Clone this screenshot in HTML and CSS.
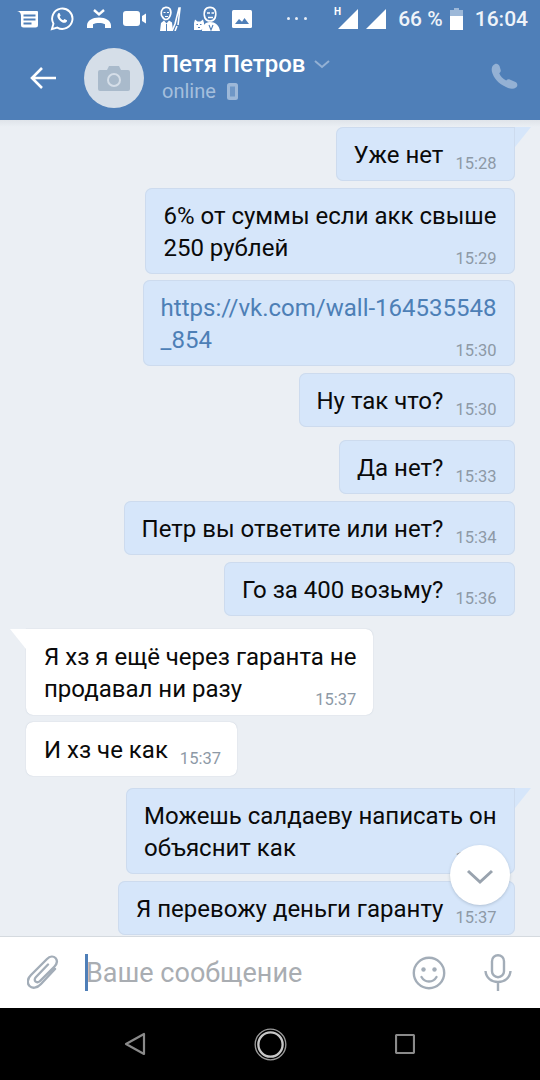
FILE: index.html
```html
<!DOCTYPE html>
<html lang="ru">
<head>
<meta charset="utf-8">
<title>Петя Петров</title>
<link rel="stylesheet" href="styles.css">
</head>
<body>
<div class="screen">
  <header class="top">
    <div class="status">
      <div class="status-icons">
        <svg class="si" width="21" height="18" viewBox="0 0 21 18"><path d="M0 1h20a1 1 0 0 1 1 1v13a2.500 2.500 0 0 1-2.500 2.500H6.500A2.500 2.500 0 0 1 4 15V5.500A5 5 0 0 0 0 1z" fill="#fff"/><path d="M6.500 5.500h12M6.500 9.500h12M6.500 13.500h8" stroke="#4f7fb8" stroke-width="1.800"/></svg>
        <svg class="si" width="24" height="24" viewBox="0 0 25 25"><path d="M2 23l1.600-5.600A10.600 10.600 0 1 1 7.600 21.400z" fill="none" stroke="#fff" stroke-width="2"/><path d="M8.600 6.800c-1.600 1.400-1.200 4 .8 6.400 2.200 2.600 5 4 7 3 1-.5 1.600-1.600 1.300-2.300l-2.700-1.300-1.200 1.300c-1.500-.5-3-2-3.700-3.700l1-1.300-1.200-2.700c-.6-.2-1.600 0-2 .6z" fill="#fff"/></svg>
        <svg class="si" width="24" height="20" viewBox="0 0 24 20"><path d="M0 16.500C0 11.500 5.500 8.500 12 8.500S24 11.500 24 16.500V19h-6v-3.800c-1.600-.9-3.800-1.200-6-1.200s-4.400.3-6 1.200V19H0z" fill="#fff"/><path d="M7 1l5 4.500L17 1" fill="none" stroke="#fff" stroke-width="2.400"/></svg>
        <svg class="si" width="23" height="15" viewBox="0 0 23 15"><rect width="17" height="15" rx="3" fill="#fff"/><path d="M19 5l4-2.500v10L19 10z" fill="#fff"/></svg>
        <svg class="si" width="23" height="25" viewBox="0 0 23 25"><path d="M3 4c1-3 6-3.500 8-1 1 2 1 5 0 7-1 2.500-2.500 3.500-4 3.500S4 12 3.200 10.500C2 10 2 5 3 4z" fill="none" stroke="#fff" stroke-width="1.700"/><path d="M4.500 6.500h2M8 6.500h2M6 10.500h3" stroke="#fff" stroke-width="1.200"/><path d="M1 25l1-8 3-2.500 2.500 3 2.500-3 3 2 1 8.500z" fill="#fff"/><path d="M7.500 18v7" stroke="#4f7fb8"/><path d="M13 25l3-7 4-16 1 0-2 17M16 25l2-5" stroke="#fff" stroke-width="1.600" fill="none"/></svg>
        <svg class="si" width="26" height="25" viewBox="0 0 26 25"><path d="M11 4c2-3.500 8-3.500 10 0 1 2 1 6 0 8-1 2-3 3-5 3s-4-1-5-3c-1-2-1-6 0-8z" fill="none" stroke="#fff" stroke-width="1.700"/><path d="M13 7h3M17.500 7h2.500M14 11.500h5" stroke="#fff" stroke-width="1.300"/><path d="M8 25c0-5 3-9 8-9s9 3 10 9z" fill="#fff"/><path d="M0 24v-7l1-3.500 2.500 2h3l2.500-2 1 3.500v5l-3 2z" fill="#fff"/><path d="M2.500 18.500h1.500M6 18.500h1.500M4 21.500h2M15 19l2 5 2-5" stroke="#4f7fb8" stroke-width="1.100" fill="none"/></svg>
        <svg class="si" width="20" height="18" viewBox="0 0 20 18"><rect width="20" height="18" rx="1.500" fill="#fff"/><path d="M3 14l4-5 3 2.800 2.500-3.800 4.500 6z" fill="#4f7fb8"/></svg>
      </div>
      <span class="dots">
        <i class="dot"></i><i class="dot"></i><i class="dot"></i>
      </span>
      <div class="status-right">
        <span class="net">H</span>
        <svg class="sig" width="20" height="20" viewBox="0 0 20 20"><path d="M0 20L20 0v20z" fill="#fff"/></svg>
        <svg class="sig sig2" width="20" height="20" viewBox="0 0 20 20"><path d="M0 20L20 0v20z" fill="#fff"/></svg>
        <span class="pct">66 %</span>
        <svg class="batt" width="13" height="22" viewBox="0 0 13 22"><path d="M4 0h5v2h4v6H0V2h4z" fill="#9db8d8"/><path d="M0 8h13v14H0z" fill="#fff"/></svg>
        <span class="clock">16:04</span>
      </div>
    </div>
    <div class="bar">
      <svg class="back" width="26" height="24" viewBox="0 0 26 24"><path d="M26 12H3M12 2L2 12l10 10" fill="none" stroke="#fff" stroke-width="2.600"/></svg>
      <div class="avatar">
        <svg width="32" height="25" viewBox="0 0 32 25"><path d="M2 4h7l2-4h10l2 4h7a2 2 0 0 1 2 2v17a2 2 0 0 1-2 2H2a2 2 0 0 1-2-2V6a2 2 0 0 1 2-2z" fill="#a9bacb"/><circle cx="16" cy="14" r="6" fill="none" stroke="#d5dee8" stroke-width="2"/></svg>
      </div>
      <div class="who">
        <div class="name-row">
          <span class="name">Петя Петров</span>
          <svg class="chev" width="16" height="9" viewBox="0 0 16 9"><path d="M1 1l7 6 7-6" fill="none" stroke="#94b1d4" stroke-width="2"/></svg>
        </div>
        <div class="online-row">
          <span class="online">online</span>
          <svg width="11" height="17" viewBox="0 0 11 17"><rect width="11" height="17" rx="2.500" fill="#9db8d8"/><rect x="3" y="3.500" width="5" height="10" fill="#6f97c6"/></svg>
        </div>
      </div>
      <svg class="phone" width="27" height="26" viewBox="0 0 27 26"><path d="M2 2.500C4.500-.5 7.500.5 8.500 3l1.200 4c.3 1.300-.3 2.300-1.500 3 1 3 3.500 6 7 7.500 1-1.200 2.300-1.500 3.500-1l5.800 2.500c2.200 1.200 2.500 4 .5 5.500-2.500 1.800-6 1.600-10-.5C7 20.500 2.500 14.500 1 9 .4 6.500.7 4 2 2.500z" fill="#94b1d4"/></svg>
    </div>
  </header>

  <main class="chat">
    <div class="msg out tailed"><span class="txt">Уже нет</span><time class="tm">15:28</time></div>
    <div class="msg out multi gap-m"><span class="txt">6% от суммы если акк свыше<br>250 рублей</span><time class="tm">15:29</time></div>
    <div class="msg out multi gap-s"><span class="txt link">https://vk.com/wall-164535548<br>_854</span><time class="tm">15:30</time></div>
    <div class="msg out gap-m"><span class="txt">Ну так что?</span><time class="tm">15:30</time></div>
    <div class="msg out gap-l"><span class="txt">Да нет?</span><time class="tm">15:33</time></div>
    <div class="msg out gap-m"><span class="txt">Петр вы ответите или нет?</span><time class="tm">15:34</time></div>
    <div class="msg out gap-m"><span class="txt">Го за 400 возьму?</span><time class="tm">15:36</time></div>
    <div class="msg in tailed multi gap-l"><span class="txt">Я хз я ещё через гаранта не<br>продавал ни разу</span><time class="tm">15:37</time></div>
    <div class="msg in gap-m"><span class="txt">И хз че как</span><time class="tm">15:37</time></div>
    <div class="msg out tailed multi gap-k"><span class="txt">Можешь салдаеву написать он<br>объяснит как</span><time class="tm">15:37</time></div>
    <div class="msg out gap-m"><span class="txt">Я перевожу деньги гаранту</span><time class="tm">15:37</time></div>
    <button class="down" type="button" aria-label="Вниз">
      <svg width="28" height="16" viewBox="0 0 28 16"><path d="M2 2l12 11L26 2" fill="none" stroke="#99a3ae" stroke-width="3"/></svg>
    </button>
  </main>

  <footer class="composer">
    <svg class="clip" width="32" height="36" viewBox="0 0 32 36"><path d="M28 14L14 29c-4 4.500-9 4.500-11.500 2S0 24 4 20L20 4c3-3 6.500-3 8.500-1s2 5.500-1 8.500L13 26c-1.500 1.500-3.500 1.500-4.500.5s-1-3 .5-4.500l12-12.500" fill="none" stroke="#a3adb8" stroke-width="2.400" stroke-linecap="round"/></svg>
    <div class="field"><i class="caret"></i><span class="placeholder">Ваше сообщение</span></div>
    <svg class="smile" width="34" height="34" viewBox="0 0 34 34"><circle cx="17" cy="17" r="15.200" fill="none" stroke="#a3adb8" stroke-width="2.400"/><circle cx="11.500" cy="13.500" r="2.200" fill="#a3adb8"/><circle cx="22.500" cy="13.500" r="2.200" fill="#a3adb8"/><path d="M9.500 21c2 3.500 5 4.500 7.500 4.500s5.500-1 7.500-4.500" fill="none" stroke="#a3adb8" stroke-width="2.400" stroke-linecap="round"/></svg>
    <svg class="mic" width="28" height="37" viewBox="0 0 28 37"><rect x="8" y="1.200" width="12" height="22" rx="6" fill="none" stroke="#a3adb8" stroke-width="2.400"/><path d="M1.500 17c.5 7 6 11 12.500 11s12-4 12.500-11M14 28v9" fill="none" stroke="#a3adb8" stroke-width="2.400"/></svg>
  </footer>

  <nav class="navbar">
    <svg width="22" height="24" viewBox="0 0 22 24"><path d="M20 2v20L2 12z" fill="none" stroke="#8a8a8a" stroke-width="2.200" stroke-linejoin="round"/></svg>
    <svg width="33" height="33" viewBox="0 0 34 34"><circle cx="17" cy="17" r="15.800" fill="none" stroke="#9a9a9a" stroke-width="1.400"/><circle cx="17" cy="17" r="12.500" fill="none" stroke="#c8c8c8" stroke-width="2.400"/></svg>
    <svg width="20" height="20" viewBox="0 0 20 20"><rect x="1" y="1" width="18" height="18" rx="1" fill="none" stroke="#8a8a8a" stroke-width="2.200"/></svg>
  </nav>
</div>
</body>
</html>
```
FILE: styles.css
```css
* { box-sizing: border-box; }
html, body { margin: 0; padding: 0; }
body { font-family: Roboto, "Noto Sans", sans-serif; background: #000; }

.screen {
  width: 540px;
  height: 1080px;
  display: flex;
  flex-direction: column;
  overflow: hidden;
}

/* header */
.top { height: 120px; flex: none; background: #4f7fb8; color: #fff; position: relative; z-index: 2; }
.status { height: 40px; display: flex; align-items: center; padding: 0 12px 3px 17px; }
.status-icons { display: flex; align-items: center; gap: 12.4px; }
.si { display: block; flex: none; }
.dots { display: flex; gap: 5.500px; margin-left: 34.600px; }
.dot { width: 3px; height: 3px; border-radius: 50%; background: #e8eef6; display: block; }
.status-right { margin-left: auto; display: flex; align-items: center; position: relative; }
.net { font-size: 10px; font-weight: 700; line-height: 10px; align-self: flex-start; margin-right: -3px; }
.sig { display: block; }
.sig2 { margin-left: 8px; }
.pct { font-size: 21px; font-weight: 500; margin-left: 12px; color: #eef3f9; }
.batt { margin-left: 7px; display: block; }
.clock { font-size: 21px; font-weight: 500; margin-left: 12px; color: #eef3f9; }

.bar { height: 80px; display: flex; align-items: center; padding: 0 22px 4px 30px; }
.back { flex: none; display: block; }
.avatar {
  width: 60px; height: 60px; border-radius: 50%;
  background: #d5dee8; margin-left: 28px; flex: none;
  display: flex; align-items: center; justify-content: center;
}
.who { margin-left: 18px; margin-bottom: 2px; flex: 1; display: flex; flex-direction: column; }
.name-row { display: flex; align-items: center; gap: 9px; height: 28px; }
.name { font-size: 24px; font-weight: 500; }
.online-row { display: flex; align-items: center; gap: 11px; height: 26px; }
.online { font-size: 20px; color: #a5bfdd; }
.phone { display: block; flex: none; margin-bottom: 4px; }

/* chat */
.chat {
  flex: 1;
  min-height: 0;
  background: linear-gradient(#dfe4ea, #ebeff4 7px);
  position: relative;
  display: flex;
  flex-direction: column;
  padding: 7px 25px 0 26px;
  overflow: hidden;
}
.msg {
  display: flex;
  align-items: flex-end;
  flex: none;
  gap: 12px;
  position: relative;
  padding: 12px 18.500px 10px 18px;
  border-radius: 7px;
  white-space: nowrap;
}
.out { align-self: flex-end; background: #d6e6fa; box-shadow: inset 0 0 0 1px #cddbee; }
.in { align-self: flex-start; background: #fff; padding-right: 16.500px; box-shadow: 0 0 1px rgba(120, 140, 165, .5); }
.txt { font-size: 24px; line-height: 32px; color: #0a0a0a; }
.link { color: #4d7fb6; }
.tm { font-size: 16.500px; line-height: 18px; margin-bottom: -2px; color: #8d99a6; }
.multi { flex-direction: column; align-items: flex-start; gap: 0; padding-bottom: 6px; }
.multi .tm { align-self: flex-end; margin-top: -14px; margin-bottom: 0; }

.gap-s { margin-top: 6px; }
.gap-m { margin-top: 7px; }
.gap-k { margin-top: 12px; }
.gap-l { margin-top: 13px; }

.tailed.out { border-top-right-radius: 0; }
.tailed.in { border-top-left-radius: 0; }
.tailed::after {
  content: "";
  position: absolute;
  top: 0;
  width: 16px;
  height: 20px;
  background: inherit;
}
.tailed.out::after { left: 100%; clip-path: polygon(0 0, 100% 0, 0 100%); }
.tailed.in::after { right: 100%; clip-path: polygon(0 0, 100% 0, 100% 100%); }

.down {
  position: absolute;
  left: 450px;
  top: 725px;
  width: 60px;
  height: 60px;
  border: 0;
  padding: 3px 0 0;
  border-radius: 50%;
  background: #fff;
  box-shadow: 0 1px 3px rgba(60, 80, 100, .25);
  display: flex;
  align-items: center;
  justify-content: center;
}

/* composer */
.composer {
  height: 72px;
  flex: none;
  background: #fff;
  border-top: 1px solid #d5dadf;
  display: flex;
  align-items: center;
  padding: 0 28px 0 27px;
  position: relative;
  z-index: 2;
}
.clip { display: block; flex: none; }
.field { flex: 1; margin-left: 26px; display: flex; align-items: center; position: relative; height: 37px; }
.caret { position: absolute; left: 0; top: 0; width: 3px; height: 37px; background: #4f7fb8; }
.placeholder { font-size: 27px; color: #a9adb2; margin-left: 1px; }
.smile { display: block; flex: none; }
.mic { display: block; flex: none; margin-left: 38px; }

/* nav */
.navbar {
  height: 72px;
  flex: none;
  background: #000;
  display: flex;
  align-items: center;
  justify-content: space-between;
  padding: 0 125px 0 124px;
}
.navbar svg { display: block; }
```
